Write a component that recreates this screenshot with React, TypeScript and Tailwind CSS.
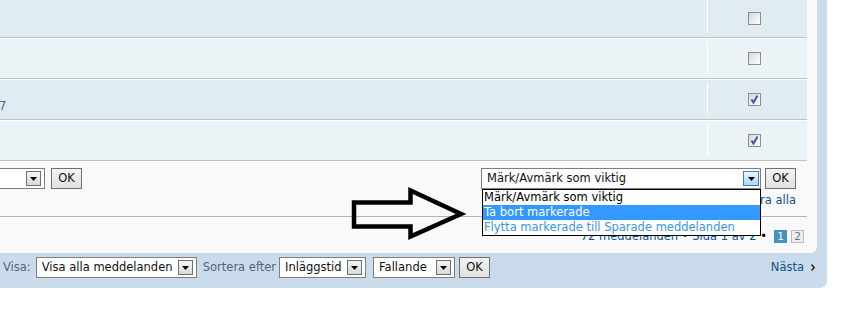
import React from "react";

function Check({ checked }: { checked: boolean }) {
  return (
    <div className="relative w-[13px] h-[13px] border border-[#8e8e8e] bg-linear-to-br from-[#d4d4d4] via-[#ececec] to-[#fdfdfd]">
      {checked && (
        <svg className="absolute left-0 top-0" width="11" height="11" viewBox="0 0 11 11">
          <path d="M2.5 5.5 L4.5 8.5 L8.5 1.5" fill="none" stroke="#3a58a6" strokeWidth="2" />
        </svg>
      )}
    </div>
  );
}

function Arrow() {
  return (
    <svg width="7" height="4" viewBox="0 0 7 4">
      <polygon points="0,0 7,0 3.5,4" fill="#000" />
    </svg>
  );
}

function Sel({
  w,
  text,
  hover = false,
  extra = "",
}: {
  w: string;
  text: string;
  hover?: boolean;
  extra?: string;
}) {
  return (
    <div
      className={`${w} ${extra} h-[21px] shrink-0 border border-[#7f7f7f] bg-white flex items-center pl-[5px] py-[2px] ${
        hover ? "pr-[1px]" : "pr-[3px]"
      }`}
    >
      <span className="flex-1 overflow-hidden whitespace-nowrap leading-[15px] text-[#111]">{text}</span>
      {hover ? (
        <div className="h-full w-[16px] border border-[#3c7fb1] bg-linear-to-b from-[#eaf6fd] to-[#a9d8f3] flex items-center justify-center">
          <Arrow />
        </div>
      ) : (
        <div className="h-full w-[15px] border border-[#6f6f6f] bg-linear-to-b from-[#f4f4f4] to-[#d9d9d9] flex items-center justify-center">
          <Arrow />
        </div>
      )}
    </div>
  );
}

function OkBtn({ extra = "" }: { extra?: string }) {
  return (
    <div
      className={`${extra} h-[21px] w-[31px] shrink-0 border border-[#707070] bg-linear-to-b from-[#f3f3f3] to-[#e1e1e1] flex items-center justify-center leading-none text-[#111]`}
    >
      OK
    </div>
  );
}

function Row({
  first = false,
  checked,
  bg,
  children,
}: {
  first?: boolean;
  checked: boolean;
  bg: string;
  children?: React.ReactNode;
}) {
  return (
    <li
      className={`${bg} ${
        first ? "h-[38px]" : "h-[41px] border-t border-t-white"
      } border-b border-b-[#bac3ca] flex`}
    >
      <div className="flex-1">{children}</div>
      <div
        className={`w-[100px] border-l border-white flex items-start pl-[40px] ${
          first ? "mb-[4px] pt-[12px]" : "mt-[2px] mb-[4px] pt-[11px]"
        }`}
      >
        <Check checked={checked} />
      </div>
    </li>
  );
}

export default function App() {
  return (
    <div className="relative w-[842px] h-[312px] bg-white overflow-hidden font-['DejaVu_Sans',Verdana,sans-serif] text-[11.5px] text-black">
      <div className="w-[827px] bg-[#cadceb] rounded-br-[7px]">
        <div className="w-[817px] bg-[#f9f9f9] rounded-br-[7px] pr-[10px]">
          <ul className="w-[807px]">
            <Row first checked={false} bg="bg-[#e1ebf2]" />
            <Row checked={false} bg="bg-[#ecf3f7]" />
            <Row checked bg="bg-[#e1ebf2]">
              <div className="pt-[18px] leading-[16px] text-[#536482] -ml-[1px]">7</div>
            </Row>
            <Row checked bg="bg-[#ecf3f7]" />
          </ul>

          <div className="w-[807px] h-[56px] border-b border-[#a8b6c2] flex justify-between items-start pt-[7px]">
            <div className="flex items-start">
              <Sel w="w-[121px]" extra="-ml-[76px]" text="" />
              <OkBtn extra="ml-[6px]" />
            </div>
            <div className="flex flex-col items-end mr-[11px]">
              <div className="flex items-start">
                <Sel w="w-[280px]" text="Märk/Avmärk som viktig" hover />
                <OkBtn extra="ml-[4px]" />
              </div>
              <div className="mt-[4px] leading-[14px] text-[#105289] whitespace-nowrap">
                Markera alla • Avmarkera alla
              </div>
            </div>
          </div>

          <div className="w-[807px] h-[36px] flex justify-end items-start pt-[13px] pr-[3px]">
            <span className="leading-[13px] text-[#105289] whitespace-nowrap mr-[7px]">
              72 meddelanden • Sida 1 av 2 <span className="text-black">•</span>
            </span>
            <span className="w-[13px] h-[13px] bg-[#4692bf] text-white text-[10.5px] leading-[13px] text-center">
              1
            </span>
            <span className="ml-[4px] w-[13px] h-[13px] border border-[#b4bac0] bg-[#ecedee] text-[#5c758c] text-[10.5px] leading-[11px] text-center">
              2
            </span>
          </div>
        </div>

        <div className="h-[35px] flex items-start pt-[4px] pl-[3px] pr-[12px]">
          <div className="h-[21px] flex items-center text-[#536482]">Visa:</div>
          <Sel w="w-[161px]" extra="ml-[5px]" text="Visa alla meddelanden" />
          <div className="h-[21px] flex items-center ml-[6px] text-[#536482] whitespace-nowrap">Sortera efter</div>
          <Sel w="w-[87px]" extra="ml-[3px]" text="Inläggstid" />
          <Sel w="w-[82px]" extra="ml-[7px]" text="Fallande" />
          <OkBtn extra="ml-[4px]" />
          <div className="ml-auto h-[21px] flex items-center text-[#105289]">
            Nästa
            <svg className="ml-[7px]" width="4" height="7" viewBox="0 0 4 7">
              <path d="M0.5 0.5 L3.2 3.5 L0.5 6.5" fill="none" stroke="#222" strokeWidth="1.4" />
            </svg>
          </div>
        </div>
      </div>

      {/* open dropdown list */}
      <div className="absolute left-[482px] top-[189px] w-[279px] border border-black bg-white">
        <div className="h-[15px] leading-[15px] pl-[1px] text-black whitespace-nowrap">Märk/Avmärk som viktig</div>
        <div className="h-[15px] leading-[15px] pl-[1px] bg-[#3399ff] text-white whitespace-nowrap">Ta bort markerade</div>
        <div className="h-[15px] leading-[15px] pl-[1px] text-[#3a95e4] whitespace-nowrap">
          Flytta markerade till Sparade meddelanden
        </div>
      </div>

      {/* annotation arrow */}
      <svg className="absolute left-0 top-0 pointer-events-none" width="842" height="312" viewBox="0 0 842 312">
        <polygon
          points="354,202.5 410.5,202.5 410.5,190.5 461,214 410.5,236.5 410.5,226.5 354,226.5"
          fill="none"
          stroke="#000"
          strokeWidth="4.5"
          strokeLinejoin="miter"
        />
      </svg>
    </div>
  );
}
